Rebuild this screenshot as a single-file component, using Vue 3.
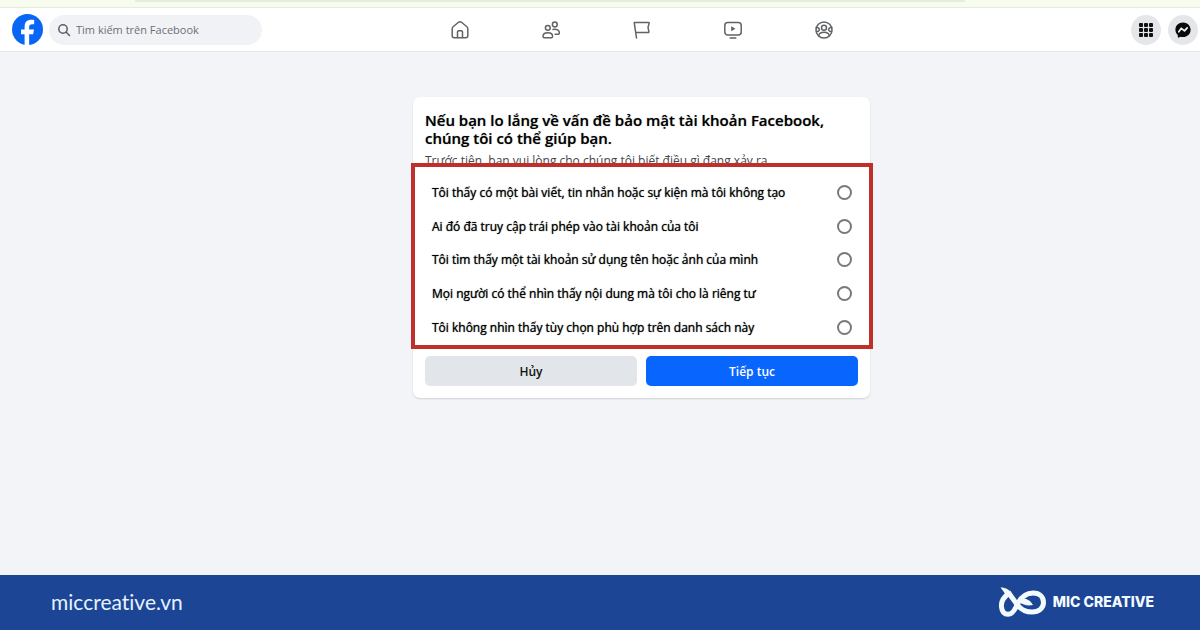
<script setup>
import { ref } from 'vue'

const query = ref('')
const choice = ref('')

const options = [
  { id: 'post', label: 'Tôi thấy có một bài viết, tin nhắn hoặc sự kiện mà tôi không tạo' },
  { id: 'access', label: 'Ai đó đã truy cập trái phép vào tài khoản của tôi' },
  { id: 'imposter', label: 'Tôi tìm thấy một tài khoản sử dụng tên hoặc ảnh của mình' },
  { id: 'privacy', label: 'Mọi người có thể nhìn thấy nội dung mà tôi cho là riêng tư' },
  { id: 'other', label: 'Tôi không nhìn thấy tùy chọn phù hợp trên danh sách này' }
]
</script>

<template>
  <div class="page">
    <div class="strip"><div class="strip-bar"></div></div>

    <header class="header">
      <div class="left">
        <a class="brand" href="#" aria-label="Facebook">
          <svg viewBox="0 0 32 32" width="31" height="31">
            <circle cx="16" cy="16" r="16" fill="#0866f5" />
            <path fill="#fff" d="M13 31.7V20.8H9.3v-4.7H13v-2.8c0-5 2.3-7.3 7-7.3.9 0 2.1.1 2.9.3v4.3c-.5-.1-1.100-.1-1.900-.1-2.600 0-3.300 1-3.300 3.200v2.400h5l-.9 4.700h-4.100v11.100c-1.500.3-3.200.3-4.700.1z" />
          </svg>
        </a>
        <label class="search">
          <svg viewBox="0 0 14 14" width="14" height="14" fill="none" stroke="#5b5e63" stroke-width="1.500" stroke-linecap="round">
            <circle cx="6" cy="6" r="4.200" />
            <path d="M9.200 9.200 12.500 12.500" />
          </svg>
          <input v-model="query" type="search" placeholder="Tìm kiếm trên Facebook" aria-label="Tìm kiếm trên Facebook" />
        </label>
      </div>

      <nav class="nav">
        <a href="#" aria-label="home">
          <svg viewBox="0 0 20 20" width="20" height="20">
            <path d="M2.200 8.800c0-1 .4-1.700 1.200-2.300l4.800-4c1.100-.9 2.500-.9 3.600 0l4.800 4c.8.600 1.200 1.300 1.200 2.300v7c0 1.200-.8 2-2 2H4.200c-1.200 0-2-.8-2-2z" />
            <path d="M7.500 17.500v-5.500c0-.8.400-1.200 1.200-1.200h2.600c.8 0 1.200.4 1.200 1.200v5.500" />
          </svg>
        </a>
        <a href="#" aria-label="friends">
          <svg viewBox="0 0 20 20" width="20" height="20">
            <circle cx="6.800" cy="7.800" r="2.400" />
            <circle cx="13.800" cy="4.500" r="2.400" />
            <path d="M2 16.400c0-2.300 1.700-3.700 4.800-3.700s4.800 1.400 4.800 3.700c0 .9-.5 1.300-1.300 1.300H3.300c-.8 0-1.300-.4-1.300-1.300z" />
            <path d="M12 9.400c4-.6 6.400.9 6.400 3.600 0 .8-.5 1.200-1.300 1.200h-3" />
          </svg>
        </a>
        <a href="#" aria-label="pages">
          <svg viewBox="0 0 20 20" width="20" height="20">
            <path d="M4.500 18 2.200 2.500h14.300c.6 0 .8.400.6.900l-1.100 4 .9 4.200c.1.500-.1.900-.7.900H3.700" />
          </svg>
        </a>
        <a href="#" aria-label="video">
          <svg viewBox="0 0 20 20" width="20" height="20">
            <rect x="1.800" y="2.500" width="16.400" height="12.500" rx="3" />
            <path d="M7.200 17.900h5.600" />
            <path class="solid" d="M8.200 6.200v5l4.300-2.500z" />
          </svg>
        </a>
        <a href="#" aria-label="groups">
          <svg viewBox="0 0 20 20" width="20" height="20">
            <circle cx="10" cy="10" r="8" />
            <circle cx="10" cy="7.700" r="2.500" />
            <path d="M4.700 15.800c.4-2.300 2.400-3.500 5.300-3.500s4.900 1.200 5.300 3.500" />
            <path d="M2.300 7.600c1.800-.3 3 .4 3 1.900s-1.300 2.200-2.900 2M17.700 7.600c-1.800-.3-3 .4-3 1.900s1.300 2.200 2.900 2" />
          </svg>
        </a>
      </nav>

      <div class="actions">
        <button type="button" aria-label="menu">
          <svg viewBox="0 0 16 16" width="16" height="16" fill="#111">
            <rect x="1" y="1" width="4" height="4" rx="1" />
            <rect x="6" y="1" width="4" height="4" rx="1" />
            <rect x="11" y="1" width="4" height="4" rx="1" />
            <rect x="1" y="6" width="4" height="4" rx="1" />
            <rect x="6" y="6" width="4" height="4" rx="1" />
            <rect x="11" y="6" width="4" height="4" rx="1" />
            <rect x="1" y="11" width="4" height="4" rx="1" />
            <rect x="6" y="11" width="4" height="4" rx="1" />
            <rect x="11" y="11" width="4" height="4" rx="1" />
          </svg>
        </button>
        <button type="button" aria-label="Messenger">
          <svg viewBox="0 0 16 16" width="16" height="16">
            <path fill="#0a0a0a" d="M8 .5C3.700.5.400 3.600.400 7.700c0 2.200.9 4 2.400 5.300v2c0 .5.500.8 1 .6l1.700-.8c.8.200 1.600.3 2.500.3 4.300 0 7.600-3.100 7.600-7.300S12.300.5 8 .5z" />
            <path fill="none" stroke="#f1f2f4" stroke-width="1.700" stroke-linecap="round" stroke-linejoin="round" d="M3.800 9.800 6.300 6.300l3.200 2.600 2.700-3" />
          </svg>
        </button>
      </div>
    </header>

    <main class="main">
      <form class="card" @submit.prevent>
        <h1>Nếu bạn lo lắng về vấn đề bảo mật tài khoản Facebook, chúng tôi có thể giúp bạn.</h1>
        <p>Trước tiên, bạn vui lòng cho chúng tôi biết điều gì đang xảy ra.</p>
        <div class="options" role="radiogroup">
          <label v-for="o in options" :key="o.id" class="option">
            <span>{{ o.label }}</span>
            <input v-model="choice" type="radio" name="reason" :value="o.id" />
          </label>
        </div>
        <div class="buttons">
          <button type="button" class="cancel">Hủy</button>
          <button type="submit" class="next">Tiếp tục</button>
        </div>
      </form>
    </main>

    <footer class="footer">
      <a class="site" href="#">miccreative.vn</a>
      <div class="mic">
        <svg viewBox="0 0 48 30" width="48" height="30" fill="none" stroke="#f4fbff" stroke-width="5">
          <path d="M9 7C4 11 2 16 2.500 20c.5 5 3 7.300 6.500 7.300 4 0 6-3 8-7.300C20 13 25 6 34 6c7 0 10.500 4 10.500 9.500S40 25 33 25c-8 0-12-3-16-9L9 5" />
          <path fill="#f4fbff" stroke="none" d="M1.500.5C7 .5 11 3 13 7l-6 4c0-4-3-7-5.500-10.500zM22 11c5 0 9 2 12 7-5 1-10 0-14-3z" />
        </svg>
        <span>MIC CREATIVE</span>
      </div>
    </footer>
  </div>
</template>

<style>
body {
  margin: 0;
  background: #f2f4f8;
}
</style>

<style scoped>
.page {
  display: flex;
  flex-direction: column;
  min-height: 100vh;
  font-family: "Open Sans", "Noto Sans", sans-serif;
  color: #111;
}
.page *, .page {
  box-sizing: border-box;
}
a {
  text-decoration: none;
}
button, input {
  font-family: inherit;
}
.strip {
  height: 8px;
  background: #f7fcef;
  border-bottom: 1px solid #e6ebdf;
}
.strip-bar {
  height: 2px;
  margin: 0 235px 0 135px;
  background: #e2efd9;
}
.header {
  display: grid;
  grid-template-columns: minmax(0, 414fr) 455px minmax(0, 331fr);
  align-items: center;
  height: 44px;
  background: #fefffe;
  border-bottom: 1px solid #e6e8ec;
}
.left {
  display: flex;
  align-items: center;
  gap: 6px;
  padding-left: 12px;
}
.brand {
  display: flex;
}
.search {
  display: flex;
  align-items: center;
  gap: 5px;
  width: 213px;
  height: 30px;
  padding-left: 8px;
  border-radius: 15px;
  background: #f1f2f5;
}
.search input {
  flex: 1;
  min-width: 0;
  padding: 0;
  border: 0;
  outline: 0;
  background: none;
  font-size: 11px;
  color: #333;
}
.search input::placeholder {
  color: #6c6f75;
  opacity: 1;
}
.nav {
  display: grid;
  grid-template-columns: repeat(5, 1fr);
}
.nav a {
  display: flex;
  justify-content: center;
}
.nav svg {
  fill: none;
  stroke: #606266;
  stroke-width: 1.5;
  stroke-linecap: round;
  stroke-linejoin: round;
}
.nav .solid {
  fill: #606266;
  stroke: none;
}
.actions {
  display: flex;
  justify-content: flex-end;
  gap: 7px;
  padding-right: 2px;
}
.actions button {
  display: flex;
  align-items: center;
  justify-content: center;
  width: 30px;
  height: 30px;
  padding: 0;
  border: 0;
  border-radius: 50%;
  background: #e4e6ea;
}
.main {
  display: grid;
  grid-template-columns: minmax(0, 413fr) 457px minmax(0, 330fr);
  flex: 1;
  align-items: start;
  padding: 45px 0;
}
.card {
  grid-column: 2;
  padding: 14px 12px 12px;
  border-radius: 7px;
  background: #fff;
  box-shadow: 0 1px 2px rgba(0, 0, 0, 0.14);
}
h1 {
  margin: 0;
  font-size: 15px;
  line-height: 18px;
  font-weight: 600;
  color: #000;
  text-shadow: 0 0 1px rgba(0, 0, 0, 0.5);
}
p {
  margin: 6px 0 0;
  font-size: 12px;
  line-height: 16px;
  color: #44464a;
}
.options {
  position: relative;
  display: flex;
  flex-direction: column;
  height: 186px;
  margin: -6px -15px 7px -14px;
  padding: 9px 17px 1px;
  border: 4px solid #c0302b;
  background: #fff;
}
.option {
  display: flex;
  flex: 1;
  align-items: center;
  justify-content: space-between;
  font-size: 12px;
  font-weight: 500;
  color: #000;
  text-shadow: 0 0 1px rgba(0, 0, 0, 0.8);
}
.option input {
  appearance: none;
  width: 15px;
  height: 15px;
  margin: 0;
  border: 2px solid #77797d;
  border-radius: 50%;
  background: #fff;
}
.option input:checked {
  border: 5px solid #0866ff;
}
.buttons {
  display: grid;
  grid-template-columns: 1fr 1fr;
  gap: 9px;
}
.buttons button {
  height: 30px;
  padding: 0;
  border: 0;
  border-radius: 5px;
  font-size: 12px;
  font-weight: 600;
}
.cancel {
  background: #e2e5e9;
  color: #111;
}
.next {
  background: #0866ff;
  color: #fff;
}
.footer {
  display: flex;
  align-items: center;
  justify-content: space-between;
  height: 55px;
  padding: 0 46px 2px 51px;
  background: #1c4595;
  color: #f4fbff;
}
.site {
  font-family: Lato, sans-serif;
  font-size: 21px;
  font-variant-ligatures: none;
  color: #e4f3ff;
}
.mic {
  display: flex;
  align-items: center;
  gap: 6px;
  font-family: Inter, sans-serif;
  font-size: 14px;
  font-weight: 800;
}
</style>
